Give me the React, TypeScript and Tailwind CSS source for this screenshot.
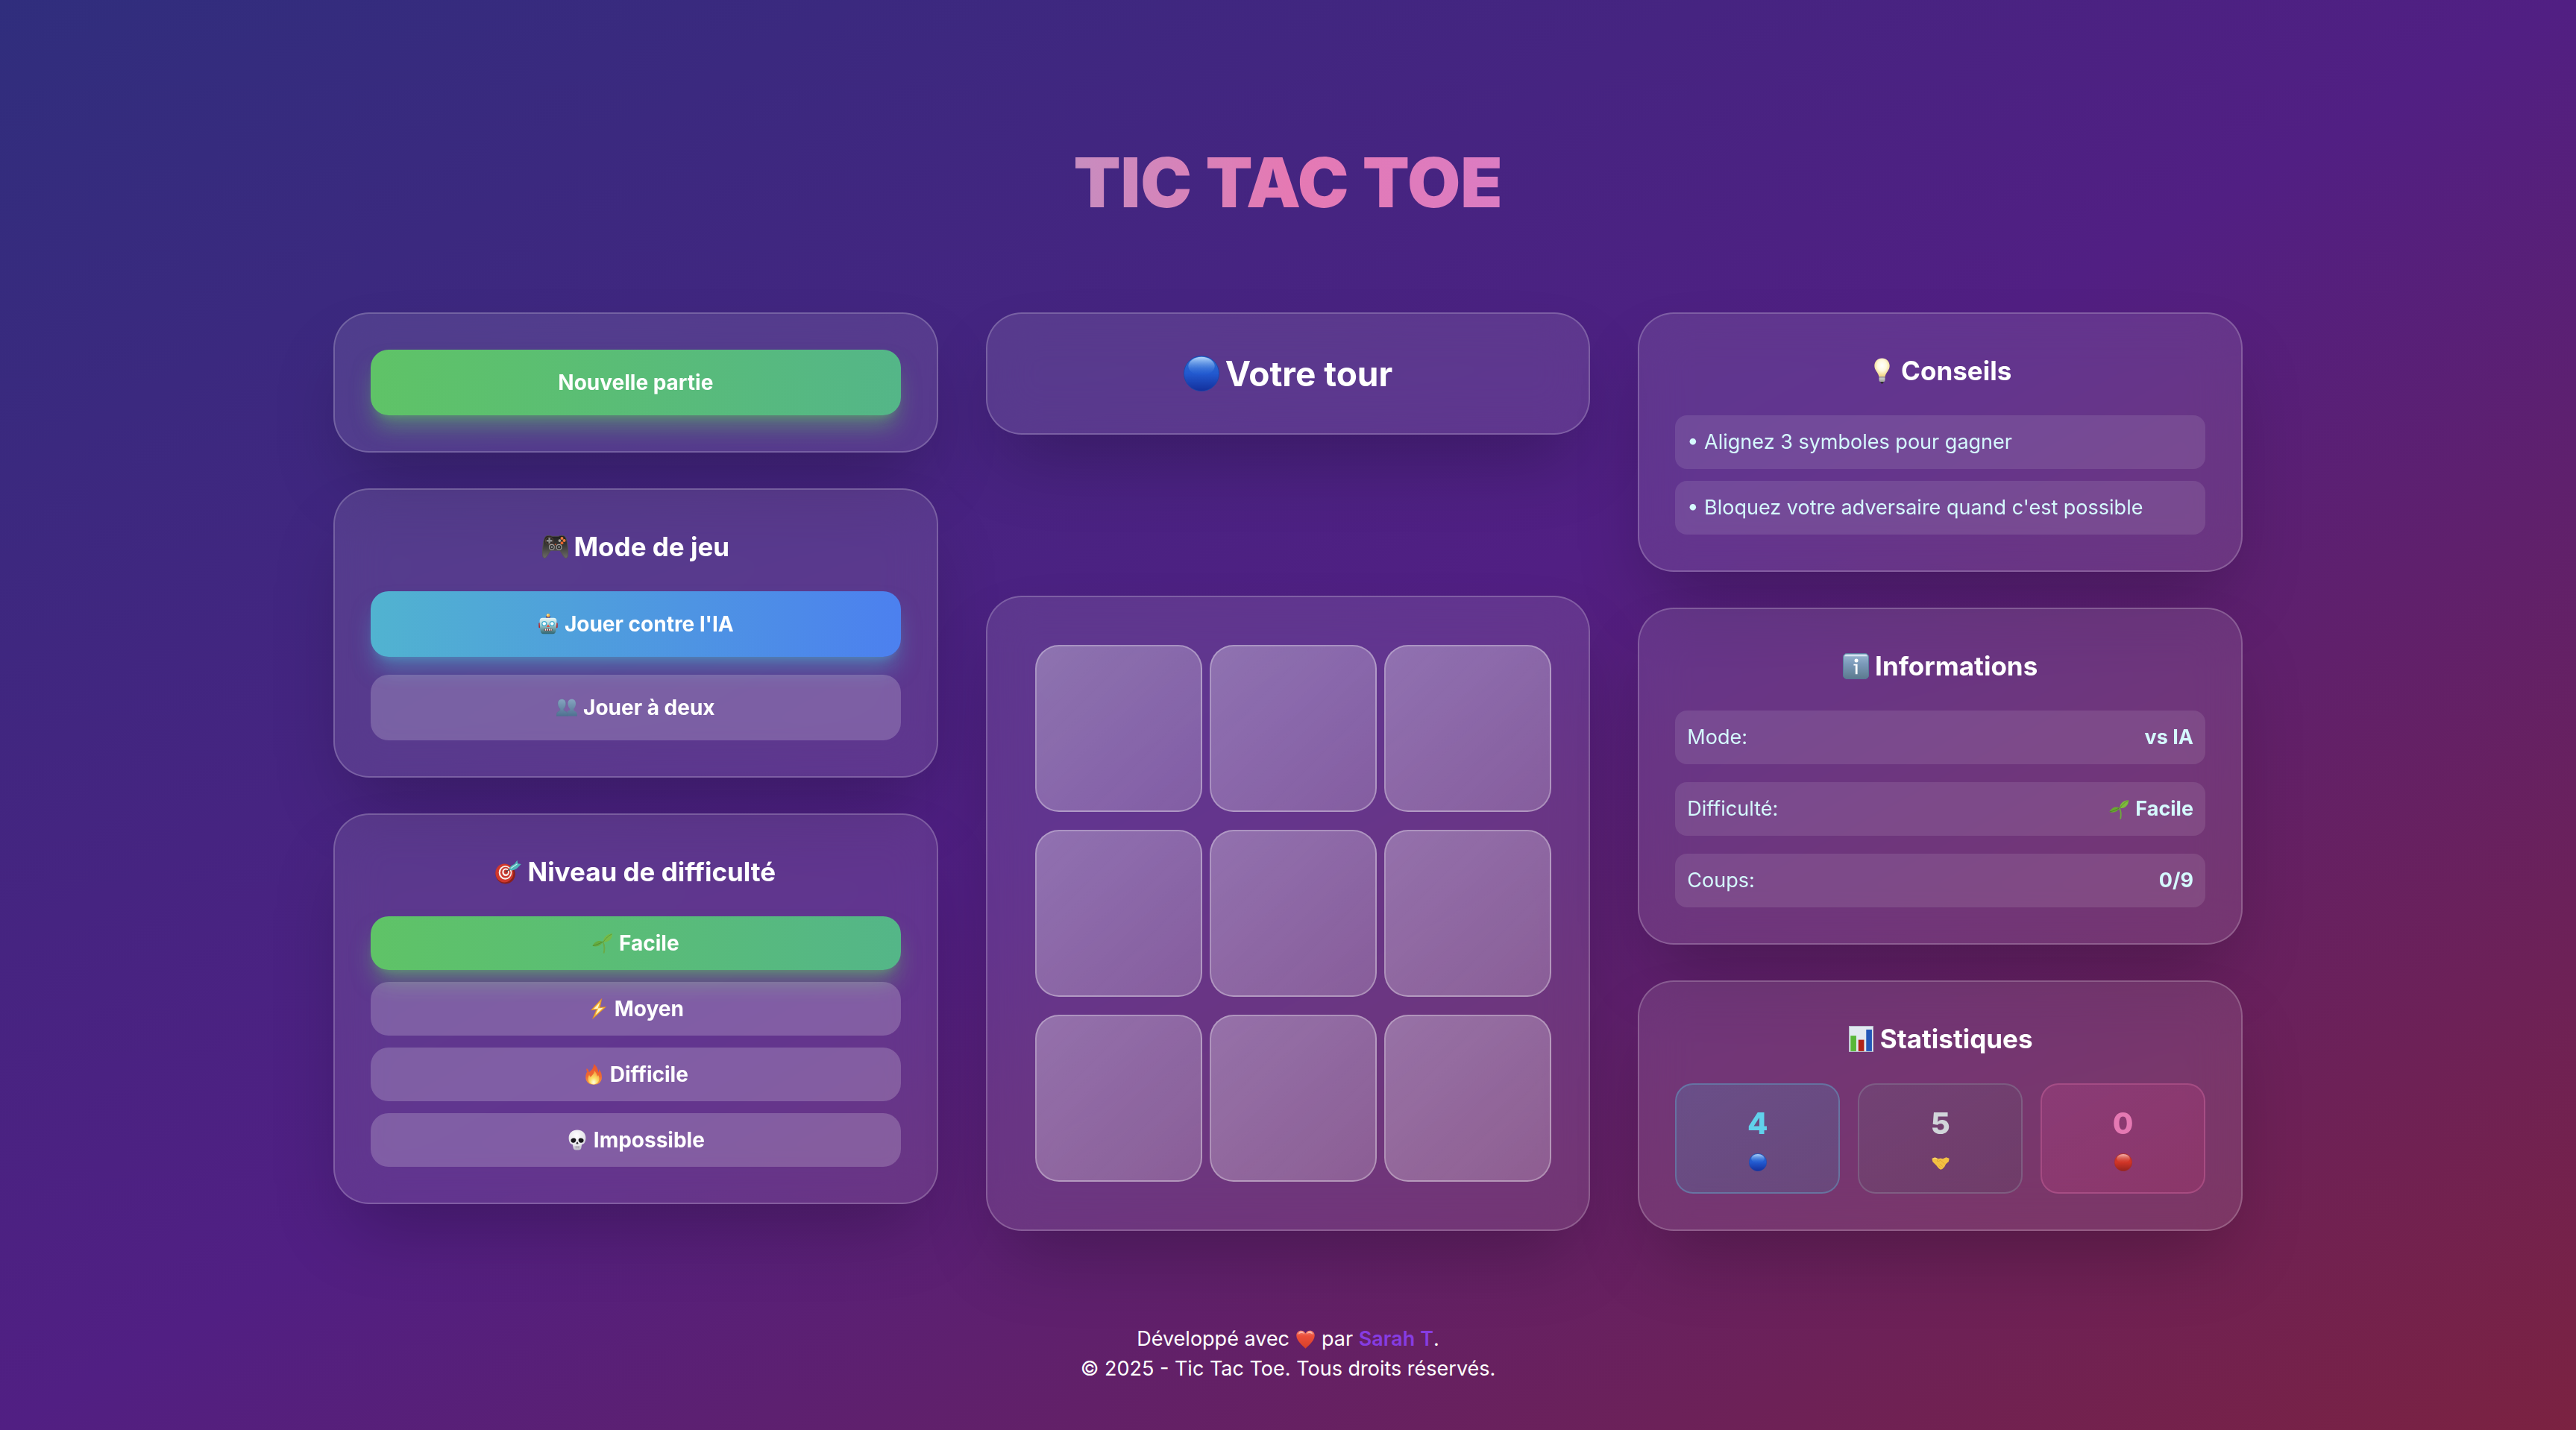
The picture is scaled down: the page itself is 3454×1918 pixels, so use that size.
import type { ReactNode } from "react";

type IconProps = { className?: string };

function Svg({ className = "size-[1em]", label, children }: { className?: string; label: string; children: ReactNode }) {
  return (
    <svg viewBox="0 0 32 32" role="img" aria-label={label} className={`${className} shrink-0`}>
      {children}
    </svg>
  );
}

function BlueBall({ className }: IconProps) {
  return (
    <Svg className={className} label="Rond bleu">
      <defs>
        <linearGradient id="ballBlue" x1="0" y1="0" x2="0" y2="1">
          <stop offset="0" stopColor="#2b6fd0" />
          <stop offset="0.5" stopColor="#2259cf" />
          <stop offset="1" stopColor="#132f9c" />
        </linearGradient>
        <linearGradient id="ballBlueShine" x1="0" y1="0" x2="0" y2="1">
          <stop offset="0" stopColor="#b4d6fb" />
          <stop offset="1" stopColor="#2f6fdd" stopOpacity="0" />
        </linearGradient>
      </defs>
      <circle cx="16" cy="16" r="15.7" fill="url(#ballBlue)" stroke="#1c47a8" strokeWidth="0.6" />
      <ellipse cx="16" cy="9.4" rx="11.8" ry="8.2" fill="url(#ballBlueShine)" />
    </Svg>
  );
}

function RedBall({ className }: IconProps) {
  return (
    <Svg className={className} label="Rond rouge">
      <defs>
        <linearGradient id="ballRed" x1="0" y1="0" x2="0" y2="1">
          <stop offset="0" stopColor="#c9392d" />
          <stop offset="0.5" stopColor="#d03426" />
          <stop offset="1" stopColor="#94231d" />
        </linearGradient>
        <linearGradient id="ballRedShine" x1="0" y1="0" x2="0" y2="1">
          <stop offset="0" stopColor="#f6b8b0" />
          <stop offset="1" stopColor="#d8473a" stopOpacity="0" />
        </linearGradient>
      </defs>
      <circle cx="16" cy="16" r="15.7" fill="url(#ballRed)" stroke="#a32c28" strokeWidth="0.6" />
      <ellipse cx="16" cy="9.4" rx="11.8" ry="8.2" fill="url(#ballRedShine)" />
    </Svg>
  );
}

function Gamepad() {
  return (
    <Svg label="Manette">
      <defs>
        <linearGradient id="padBody" x1="0" y1="0" x2="0" y2="1">
          <stop offset="0" stopColor="#1f1f1f" />
          <stop offset="0.45" stopColor="#3a3a38" />
          <stop offset="1" stopColor="#6b6a66" />
        </linearGradient>
      </defs>
      <path
        d="M5.500 2.600C8 1.800 10 2.200 12 3h8c2-.8 4-1.200 6.500-.4 2.400.8 3.400 4 4.100 8.400.6 4.700 1.100 9 1.100 13.600 0 4.200-1.800 5.700-3.600 4.800-2.400-1.400-4.300-6.400-6.600-9.100h-11c-2.300 2.700-4.200 7.700-6.600 9.100-1.800.9-3.600-.6-3.600-4.800 0-4.600.5-8.900 1.100-13.600.7-4.400 1.700-7.600 4.100-8.400Z"
        fill="url(#padBody)"
        stroke="#55534f"
        strokeWidth="0.8"
      />
      <circle cx="8.800" cy="8.400" r="4.700" fill="#2a2a2a" stroke="#6d4a3c" strokeWidth="0.7" />
      <path d="M7.700 4.900h2.200v2.400h2.400v2.200H9.900v2.400H7.700V9.500H5.300V7.300h2.400Z" fill="#8d8d8d" />
      <circle cx="24.200" cy="5.500" r="1.800" fill="#f07a3c" />
      <circle cx="27" cy="8.300" r="1.800" fill="#f07a3c" />
      <circle cx="21.400" cy="8.300" r="1.700" fill="#a8a5a0" />
      <circle cx="24.200" cy="11.200" r="1.800" fill="#e8642c" />
      <circle cx="11.700" cy="16.200" r="3.100" fill="#2c2c2c" stroke="#a5a39f" strokeWidth="1" />
      <circle cx="11.700" cy="16.200" r="1.200" fill="#8f8f8f" />
      <circle cx="20.600" cy="16.200" r="3.100" fill="#2c2c2c" stroke="#a5a39f" strokeWidth="1" />
      <circle cx="20.600" cy="16.200" r="1.200" fill="#8f8f8f" />
      <circle cx="16.200" cy="13" r="0.900" fill="#c8562b" />
    </Svg>
  );
}

function Robot() {
  return (
    <Svg label="Robot">
      <defs>
        <linearGradient id="robotHead" x1="0" y1="0" x2="0" y2="1">
          <stop offset="0" stopColor="#e9f8f8" />
          <stop offset="0.4" stopColor="#a9d2d6" />
          <stop offset="1" stopColor="#2f6570" />
        </linearGradient>
      </defs>
      <rect x="1.500" y="14" width="3" height="8" rx="1.400" fill="#b3262b" />
      <rect x="27.500" y="14" width="3" height="8" rx="1.400" fill="#b3262b" />
      <rect x="12.500" y="3.600" width="7" height="3.400" rx="1.500" fill="#49408c" />
      <circle cx="16" cy="2.800" r="2.700" fill="#f3b13e" />
      <circle cx="15.500" cy="1.900" r="1.100" fill="#fff0b5" />
      <path d="M7.500 6.500h17c3 0 4.500 1.800 4.500 4.500 0 4-.4 9-1 14-.4 4-1.800 6-5 6H9c-3.200 0-4.600-2-5-6-.6-5-1-10-1-14 0-2.700 1.500-4.500 4.500-4.500Z" fill="url(#robotHead)" />
      <circle cx="10" cy="15.500" r="4" fill="#3aa9cf" />
      <circle cx="10" cy="15.500" r="2.600" fill="#f7ffff" />
      <circle cx="22" cy="15.500" r="4" fill="#3aa9cf" />
      <circle cx="22" cy="15.500" r="2.600" fill="#f7ffff" />
      <path d="m16 16.200 2.500 4.300h-5Z" fill="#dc4b41" />
      <rect x="9.800" y="23" width="12.400" height="3.600" rx="1.200" fill="#5a2f2f" />
      <path d="M11 23.500h1.800v2.600H11zM14 23.500h1.800v2.600H14zM17 23.500h1.800v2.600H17zM20 23.500h1.400v2.600H20z" fill="#f4f4f4" />
    </Svg>
  );
}

function People() {
  return (
    <Svg label="Deux personnes">
      <defs>
        <linearGradient id="peopleFill" x1="0" y1="0" x2="0" y2="1">
          <stop offset="0" stopColor="#86a5c0" />
          <stop offset="1" stopColor="#4f7191" />
        </linearGradient>
      </defs>
      <g fill="url(#peopleFill)">
        <path d="M23.600 3c4 0 6.300 3 6.100 7.200-.2 3.600-1.600 6.300-3.200 7.800-.5 2 .3 3 2 3.800 2.400 1 3.500 2.700 3.500 7.200H17V21.800c1.700-.7 4.300-1.300 3.800-3.800-1.600-1.500-3-4.200-3.200-7.800C17.400 6 19.700 3 23.600 3Z" />
        <path d="M8.400 3c4 0 6.300 3 6.100 7.200-.2 3.600-1.600 6.300-3.200 7.800-.5 2.400 1 3.200 3 3.900 2.400.9 3.300 2.600 3.300 7.100H0c0-4.500 1.100-6.200 3.500-7.200 1.700-.8 2.500-1.800 2-3.800C3.900 16.500 2.500 13.800 2.300 10.200 2.100 6 4.400 3 8.400 3Z" stroke="#54708f" strokeWidth="0.4" />
      </g>
    </Svg>
  );
}

function Target() {
  return (
    <Svg label="Cible">
      <ellipse cx="12.500" cy="18.600" rx="12" ry="12" fill="#8c1f19" />
      <ellipse cx="11.300" cy="17.300" rx="11" ry="11.400" fill="#cf382c" />
      <ellipse cx="12.300" cy="16.800" rx="8" ry="8.600" fill="#f6efec" />
      <ellipse cx="12.600" cy="16.600" rx="6.300" ry="6.800" fill="#cb382e" />
      <ellipse cx="12.900" cy="16.300" rx="4.400" ry="4.800" fill="#f6efec" />
      <ellipse cx="13.100" cy="16.100" rx="2.500" ry="2.800" fill="#c5362d" />
      <path d="m13.200 16 6-4.600" stroke="#3a4a50" strokeWidth="1.100" strokeLinecap="round" />
      <path d="M17.500 12.800c-.6-2.200 2-4.700 6-6.400L27 1.600l.7 4.200 4.100.6-4.200 4.400c-3 3-7.600 4.600-10.100 2Z" fill="#4fb3b8" />
      <path d="m19 11.600 8-5.400" stroke="#c4f0ee" strokeWidth="1" />
    </Svg>
  );
}

function Sprout({ className }: IconProps) {
  return (
    <Svg className={className} label="Pousse">
      <path d="M18 30.500c1.300-6 .8-12-1.800-16.500" fill="none" stroke="#6ea83c" strokeWidth="2.200" strokeLinecap="round" />
      <path d="M17 14.500c-.4-7 4.600-12.500 14-13-.3 7.500-4.500 13-14 13Z" fill="#7ebb3d" />
      <path d="M17 14.200c4-6 8-9.500 13-12" fill="none" stroke="#4c7f24" strokeWidth="0.800" />
      <path d="M16 14c-5-3.500-12.500-1-15.500 6.200 6.500 2.200 12.800-.2 15.500-6.200Z" fill="#6aa832" />
      <path d="M1 20c5-1 9.500-3 15-6" fill="none" stroke="#3f701f" strokeWidth="0.800" />
    </Svg>
  );
}

function Bolt() {
  return (
    <Svg label="Éclair">
      <path d="M21.500.5 5 18l8.500-.8L7.500 31.500 28 13l-9.300.9Z" fill="#f5b433" stroke="#d9822b" strokeWidth="0.800" strokeLinejoin="round" />
      <path d="M18.500 6.500 9 16.200l7.200-.6-4.200 9.800L23.500 14.600l-8 .7Z" fill="#fdf6c8" />
    </Svg>
  );
}

function Fire() {
  return (
    <Svg label="Feu">
      <defs>
        <linearGradient id="fireOuter" x1="0" y1="0" x2="0" y2="1">
          <stop offset="0" stopColor="#e9532b" />
          <stop offset="0.6" stopColor="#ee6a33" />
          <stop offset="1" stopColor="#f5a243" />
        </linearGradient>
        <radialGradient id="fireInner" cx="0.5" cy="0.85" r="0.8">
          <stop offset="0" stopColor="#fffde0" />
          <stop offset="0.4" stopColor="#fbe06a" />
          <stop offset="1" stopColor="#f49a3c" />
        </radialGradient>
      </defs>
      <path d="M16 0c5 3.500 6.800 8 7 13 1-1.200 1.300-3 1-5 3.500 4 4.800 8.600 4.500 13.500-.4 6.500-5.500 10.300-12.200 10.300C9.300 31.800 4.200 28 3.700 21.500 3.400 17.500 4.600 14 6.400 11.500 5 10.500 4 8.500 5.600 6.800c1.800 1.200 3 3.400 3.300 5.900C12.800 10 16.400 6 16 0Z" fill="url(#fireOuter)" />
      <path d="M16.600 10c3.400 3 4.600 6 4.800 9.400.8-.6 1.200-1.500 1.300-2.600 1.700 2.300 2.300 4.800 1.700 7.600-.9 4.200-4 6.900-8.300 6.900s-7.800-2.600-8.500-6.800c-.5-3 .2-5.600 1.700-7.900.3 1.500.9 2.600 1.900 3.400C13.800 17.500 17.300 14.500 16.600 10Z" fill="url(#fireInner)" />
    </Svg>
  );
}

function Skull() {
  return (
    <Svg label="Crâne">
      <defs>
        <radialGradient id="skullFill" cx="0.45" cy="0.3" r="0.8">
          <stop offset="0" stopColor="#ffffff" />
          <stop offset="0.6" stopColor="#e6e5ea" />
          <stop offset="1" stopColor="#a9a7b3" />
        </radialGradient>
      </defs>
      <path d="M16 .5c8 0 13 5.200 13 12.300 0 3.400-.6 5.200-1.600 7.200-.8 1.600-2.600 2.600-4.400 3.200-.5 1.600-.5 3.300-.9 5.300-.4 2.200-2.200 3-6.100 3s-5.700-.8-6.100-3c-.4-2-.4-3.700-.9-5.300-1.800-.6-3.600-1.600-4.400-3.200C3.600 18 3 16.200 3 12.800 3 5.700 8 .5 16 .5Z" fill="url(#skullFill)" />
      <path d="M7 14.500c2-1.700 5.300-1.700 6.800.1 1 2.300-.6 5.400-3.300 5.700-2.800.2-4.400-1.600-4.300-4.100 0-.7.300-1.300.8-1.700ZM25 14.500c-2-1.700-5.300-1.700-6.800.1-1 2.300.6 5.400 3.300 5.700 2.800.2 4.400-1.600 4.300-4.100 0-.7-.3-1.300-.8-1.700Z" fill="#17161b" />
      <path d="M16 18.500c1.200 1.200 2 2.600 1.600 3.600-.6.700-1.100 0-1.600 0s-1 .7-1.600 0c-.4-1 .4-2.400 1.600-3.600Z" fill="#2b2930" />
      <path d="M11.800 26.500h8.400M14 25.500v3.500M16 25.500v3.500M18 25.500v3.500" stroke="#8a8894" strokeWidth="0.700" />
    </Svg>
  );
}

function Bulb() {
  return (
    <Svg label="Ampoule">
      <defs>
        <radialGradient id="bulbFill" cx="0.5" cy="0.4" r="0.6">
          <stop offset="0" stopColor="#ffffff" />
          <stop offset="0.5" stopColor="#fff8dc" />
          <stop offset="1" stopColor="#f0d27c" />
        </radialGradient>
      </defs>
      <path d="M16 .5c5.600 0 9.300 4.200 9.300 9.400 0 5.300-4.600 7.900-5.500 13.100h-7.600c-.9-5.200-5.500-7.800-5.500-13.100C6.700 4.700 10.400.5 16 .5Z" fill="url(#bulbFill)" />
      <path d="M12.400 23h7.200v4.600c0 1-.9 1.700-1.700 1.700h-3.800c-.8 0-1.700-.7-1.700-1.700Z" fill="#a9a9a6" />
      <path d="M12.400 25h7.200M12.400 27h7.200" stroke="#dcdcd8" strokeWidth="0.700" />
      <path d="M14 29.300h4l-1 2.200h-2Z" fill="#2f2e2c" />
    </Svg>
  );
}

function Info() {
  return (
    <Svg label="Information">
      <defs>
        <linearGradient id="infoFill" x1="0" y1="0" x2="0" y2="1">
          <stop offset="0" stopColor="#9cb9d3" />
          <stop offset="0.4" stopColor="#7b9aba" />
          <stop offset="1" stopColor="#5c7a8e" />
        </linearGradient>
      </defs>
      <rect x="0.400" y="0.400" width="31.200" height="31.200" rx="4.500" fill="url(#infoFill)" stroke="#55819b" strokeWidth="0.800" />
      <path d="M4 2h24c1 0 1.800.8 1.800 1.800H2.200C2.200 2.800 3 2 4 2Z" fill="#dbe8f3" />
      <circle cx="16.500" cy="9.200" r="2.300" fill="#fff" />
      <path d="M13.200 13.400h4.700v12.400h-2.500V15h-2.200Z" fill="#fff" />
    </Svg>
  );
}

function Chart() {
  return (
    <Svg label="Graphique">
      <rect x="1.400" y="0.400" width="29.200" height="31.200" fill="#e2e9f1" stroke="#b9c3cf" strokeWidth="0.800" />
      <rect x="3" y="12" width="7" height="19" fill="#58b738" />
      <rect x="12.600" y="17" width="7" height="14" fill="#b02218" />
      <rect x="22.200" y="4.500" width="7" height="26.500" fill="#2357b8" />
    </Svg>
  );
}

function Handshake({ className }: IconProps) {
  return (
    <Svg className={className} label="Poignée de main">
      <path d="M.5 9 6 7l6 2.500 4-1 4 1 6-2.500 5.500 2-1 5.500-5 4.500-2.500 5-4 4-3 1-3.500-2.500-4-5L1.800 15Z" fill="#f2c043" />
      <path d="m12 9.500-2.500 4c2 1.600 4.500.6 6-1.500l8 7M19.500 23l-4-3.500M17 26l-3.500-3.500" fill="none" stroke="#d49a2c" strokeWidth="0.900" strokeLinecap="round" strokeLinejoin="round" />
      <path d="m2.500 10 4-1.500 3.500 1.500" fill="none" stroke="#fbe28e" strokeWidth="1.200" />
    </Svg>
  );
}

function Heart() {
  return (
    <Svg label="amour">
      <defs>
        <linearGradient id="heartFill" x1="0" y1="0" x2="0" y2="1">
          <stop offset="0" stopColor="#f58a78" />
          <stop offset="0.300" stopColor="#ec4f3a" />
          <stop offset="1" stopColor="#d63f28" />
        </linearGradient>
      </defs>
      <path d="M16 30.500C11 25.500 1.500 18 1.500 9.800 1.500 5 5 2 9 2c3.200 0 5.700 1.600 7 4.500C17.300 3.600 19.800 2 23 2c4 0 7.500 3 7.500 7.800C30.500 18 21 25.500 16 30.500Z" fill="url(#heartFill)" />
      <path d="M4.500 8C5 5.200 7 3.500 9.300 3.600c2 0 3.800 1.200 4.700 3.400-3-1.500-6.500-1.200-9.500 1ZM18 7c.9-2.200 2.700-3.400 4.700-3.400 2.300-.1 4.300 1.600 4.800 4.400-3-2.200-6.500-2.500-9.500-1Z" fill="#fbc9bf" opacity="0.800" />
    </Svg>
  );
}

function Card({ className = "p-12", children }: { className?: string; children: ReactNode }) {
  return (
    <section
      className={`${className} rounded-[48px] border-2 border-white/20 bg-white/10 shadow-[0_50px_100px_-24px_rgba(0,0,0,0.25)] backdrop-blur-[32px]`}
    >
      {children}
    </section>
  );
}

function CardTitle({ icon, children }: { icon: ReactNode; children: ReactNode }) {
  return (
    <h2 className="mb-8 flex items-center justify-center gap-2 text-[35px] leading-[56px] font-bold">
      {icon}
      <span>{children}</span>
    </h2>
  );
}

const greenButton =
  "bg-linear-to-r/srgb from-[#5fc367] to-[#54b688] shadow-[0_20px_30px_-6px_rgba(95,195,103,0.5),0_8px_12px_-8px_rgba(95,195,103,0.5)]";
const blueButton =
  "bg-linear-to-r/srgb from-[#51b3d0] to-[#4c80ef] shadow-[0_20px_30px_-6px_rgba(76,179,209,0.5),0_8px_12px_-8px_rgba(76,179,209,0.5)]";
const plainButton = "bg-white/20";

function ActionButton({ tone, size, icon, children }: { tone: string; size: string; icon?: ReactNode; children: ReactNode }) {
  return (
    <button
      type="button"
      className={`${tone} ${size} flex w-full items-center justify-center gap-2 rounded-3xl text-[28px] leading-10 font-bold`}
    >
      {icon}
      <span>{children}</span>
    </button>
  );
}

function InfoRow({ label, icon, value }: { label: string; icon?: ReactNode; value: string }) {
  return (
    <div className="flex items-center justify-between rounded-2xl bg-white/10 p-4">
      <dt>{label}</dt>
      <dd className="flex items-center gap-2 font-bold">
        {icon}
        <span>{value}</span>
      </dd>
    </div>
  );
}

function Stat({ tone, color, value, icon }: { tone: string; color: string; value: number; icon: ReactNode }) {
  return (
    <div className={`${tone} flex flex-col items-center gap-2 rounded-3xl border-2 bg-linear-to-br/srgb py-6`}>
      <span className={`${color} text-[40px] leading-[56px] font-extrabold`}>{value}</span>
      <span className="flex h-8 items-center text-[24px]">{icon}</span>
    </div>
  );
}

const cells = [1, 2, 3, 4, 5, 6, 7, 8, 9];

export default function App() {
  return (
    <div className="min-h-screen bg-linear-to-br/srgb from-[#302e7d] via-[#511f83] to-[#7b2241] px-16 pt-[197px] pb-16 font-['Inter',sans-serif] text-white">
      <div className="mx-auto max-w-[2560px]">
        <h1 className="mb-[126px] bg-linear-to-r/srgb from-[#61d1eb] via-[#e579b3] to-[#b886f7] bg-clip-text text-center text-[92px] leading-[96px] font-black text-transparent">
          TIC TAC TOE
        </h1>

        <main className="grid grid-cols-3 gap-16">
          <div className="flex flex-col gap-12">
            <Card>
              <ActionButton tone={greenButton} size="py-6">
                Nouvelle partie
              </ActionButton>
            </Card>
            <Card>
              <CardTitle icon={<Gamepad />}>Mode de jeu</CardTitle>
              <div className="flex flex-col gap-6">
                <ActionButton tone={blueButton} size="py-6" icon={<Robot />}>
                  Jouer contre l'IA
                </ActionButton>
                <ActionButton tone={plainButton} size="py-6" icon={<People />}>
                  Jouer à deux
                </ActionButton>
              </div>
            </Card>
            <Card>
              <CardTitle icon={<Target />}>Niveau de difficulté</CardTitle>
              <div className="flex flex-col gap-4">
                <ActionButton tone={greenButton} size="py-4" icon={<Sprout className="size-[1em] opacity-80" />}>
                  Facile
                </ActionButton>
                <ActionButton tone={plainButton} size="py-4" icon={<Bolt />}>
                  Moyen
                </ActionButton>
                <ActionButton tone={plainButton} size="py-4" icon={<Fire />}>
                  Difficile
                </ActionButton>
                <ActionButton tone={plainButton} size="py-4" icon={<Skull />}>
                  Impossible
                </ActionButton>
              </div>
            </Card>
          </div>

          <div className="flex flex-col justify-between">
            <Card>
              <p className="flex items-center justify-center gap-2 text-[46px] leading-[64px] font-bold">
                <BlueBall className="size-12" />
                <span>Votre tour</span>
              </p>
            </Card>
            <Card className="p-16">
              <div className="grid grid-cols-3 gap-6">
                {cells.map((n) => (
                  <button
                    key={n}
                    type="button"
                    aria-label={`Case ${n}`}
                    className="size-56 rounded-4xl border-2 border-white/30 bg-linear-to-br/srgb from-white/30 to-white/20"
                  />
                ))}
              </div>
            </Card>
          </div>

          <div className="flex flex-col gap-12">
            <Card>
              <CardTitle icon={<Bulb />}>Conseils</CardTitle>
              <ul className="flex flex-col gap-4 text-[27px] leading-10 text-[#d5f9fd]">
                <li className="rounded-2xl bg-white/10 p-4">• Alignez 3 symboles pour gagner</li>
                <li className="rounded-2xl bg-white/10 p-4">• Bloquez votre adversaire quand c'est possible</li>
              </ul>
            </Card>
            <Card>
              <CardTitle icon={<Info />}>Informations</CardTitle>
              <dl className="flex flex-col gap-6 text-[27px] leading-10 text-[#d5f9fd]">
                <InfoRow label="Mode:" value="vs IA" />
                <InfoRow label="Difficulté:" icon={<Sprout />} value="Facile" />
                <InfoRow label="Coups:" value="0/9" />
              </dl>
            </Card>
            <Card>
              <CardTitle icon={<Chart />}>Statistiques</CardTitle>
              <div className="grid grid-cols-3 gap-6">
                <Stat
                  tone="border-[#61d1eb]/30 from-[#4cb3d1]/20 to-[#398ead]/20"
                  color="text-[#61d1eb]"
                  value={4}
                  icon={<BlueBall />}
                />
                <Stat
                  tone="border-[#9ca3af]/30 from-[#6b7280]/20 to-[#4b5563]/20"
                  color="text-[#d1d5da]"
                  value={5}
                  icon={<Handshake />}
                />
                <Stat
                  tone="border-[#e579b3]/30 from-[#db5297]/20 to-[#ca3975]/20"
                  color="text-[#e579b3]"
                  value={0}
                  icon={<RedBall />}
                />
              </div>
            </Card>
          </div>
        </main>

        <footer className="mt-[125px] text-center text-[27px] leading-10">
          <p className="flex items-center justify-center gap-2">
            <span>Développé avec</span>
            <Heart />
            <span>
              par{" "}
              <a href="#" className="font-semibold text-[#863ce2]">
                Sarah T
              </a>
              .
            </span>
          </p>
          <p>© 2025 - Tic Tac Toe. Tous droits réservés.</p>
        </footer>
      </div>
    </div>
  );
}
